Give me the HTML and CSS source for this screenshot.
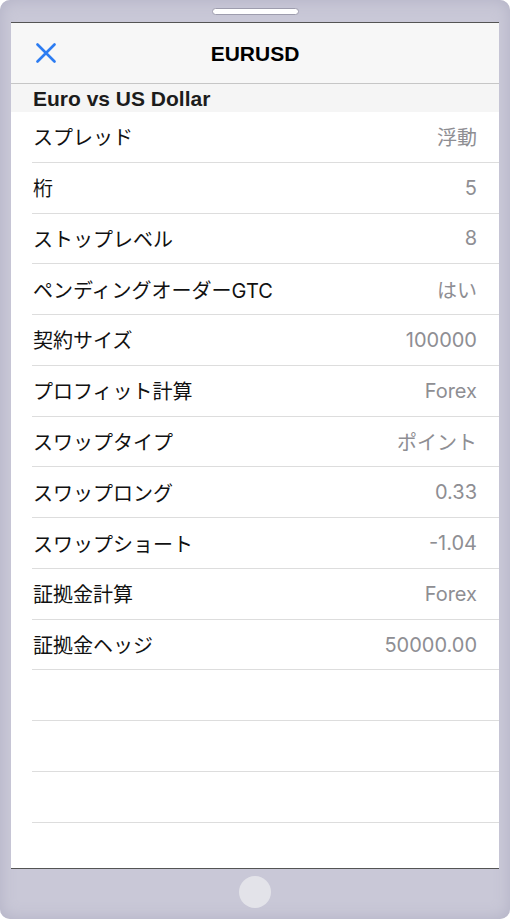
FILE: index.html
```html
<!DOCTYPE html>
<html lang="ja">
<head>
  <meta charset="UTF-8">
  <meta name="viewport" content="width=device-width, initial-scale=1.0">
  <title>EURUSD</title>
  <link rel="stylesheet" href="styles.css">
</head>
<body>
  <div class="phone">
    <div class="top-bezel">
      <div class="speaker"></div>
    </div>
    <div class="screen">
      <div class="nav-bar">
        <button class="close-button" aria-label="閉じる">
          <svg width="20" height="20" viewBox="0 0 20 20">
            <path d="M1.5 1.5 L18.5 18.5 M18.5 1.5 L1.5 18.5" stroke="#2c7cf2" stroke-width="2.6" stroke-linecap="round" fill="none"/>
          </svg>
        </button>
        <div class="nav-title">EURUSD</div>
      </div>
      <div class="section-header">Euro vs US Dollar</div>
      <div class="spec-list">
        <div class="spec-row"><span class="spec-label">スプレッド</span><span class="spec-value">浮動</span></div>
        <div class="spec-row"><span class="spec-label">桁</span><span class="spec-value">5</span></div>
        <div class="spec-row"><span class="spec-label">ストップレベル</span><span class="spec-value">8</span></div>
        <div class="spec-row"><span class="spec-label">ペンディングオーダーGTC</span><span class="spec-value">はい</span></div>
        <div class="spec-row"><span class="spec-label">契約サイズ</span><span class="spec-value">100000</span></div>
        <div class="spec-row"><span class="spec-label">プロフィット計算</span><span class="spec-value">Forex</span></div>
        <div class="spec-row"><span class="spec-label">スワップタイプ</span><span class="spec-value">ポイント</span></div>
        <div class="spec-row"><span class="spec-label">スワップロング</span><span class="spec-value">0.33</span></div>
        <div class="spec-row"><span class="spec-label">スワップショート</span><span class="spec-value">-1.04</span></div>
        <div class="spec-row"><span class="spec-label">証拠金計算</span><span class="spec-value">Forex</span></div>
        <div class="spec-row"><span class="spec-label">証拠金ヘッジ</span><span class="spec-value">50000.00</span></div>
        <div class="spec-row"></div>
        <div class="spec-row"></div>
        <div class="spec-row"></div>
      </div>
    </div>
    <div class="bottom-bezel">
      <div class="home-button"></div>
    </div>
  </div>
</body>
</html>
```

FILE: styles.css
```css
body {
  margin: 0;
  padding: 0;
  background-color: #fff;
  font-family: 'Liberation Sans', 'Noto Sans CJK JP', sans-serif;
}

.phone {
  width: 510px;
  height: 919px;
  display: flex;
  flex-direction: column;
  background-color: #c9c8d7;
  border-radius: 10px;
  box-shadow: inset 0 0 16px #b2b1c5;
  overflow: hidden;
}

.top-bezel {
  height: 22px;
  display: flex;
  justify-content: center;
  padding-top: 8px;
  box-sizing: border-box;
}

.speaker {
  width: 87px;
  height: 7px;
  background: #fff;
  border: 1px solid #9e9dae;
  border-radius: 4px;
  box-sizing: border-box;
}

.screen {
  flex: 1;
  margin: 0 11px;
  background: #fff;
  border-top: 1px solid #545454;
  border-bottom: 1px solid #545454;
  display: flex;
  flex-direction: column;
}

.nav-bar {
  height: 61px;
  display: flex;
  align-items: center;
  justify-content: center;
  position: relative;
  background: #f7f7f7;
  border-bottom: 1px solid #c6c6c6;
  box-sizing: border-box;
}

.close-button {
  position: absolute;
  left: 25px;
  top: 20px;
  width: 20px;
  height: 20px;
  padding: 0;
  border: none;
  background: none;
  display: flex;
}

.nav-title {
  font-size: 21px;
  font-weight: bold;
  color: #000;
  margin-top: 1px;
}

.section-header {
  height: 28px;
  padding-left: 22px;
  background: #f5f5f5;
  font-size: 21px;
  font-weight: bold;
  color: #1c1c1c;
  line-height: 30px;
  box-sizing: border-box;
}

.spec-list {
  display: flex;
  flex-direction: column;
}

.spec-row {
  height: 50.77px;
  margin-left: 21px;
  padding: 0 22px 0 1px;
  display: flex;
  align-items: center;
  justify-content: space-between;
  border-bottom: 1px solid #dddddd;
  box-sizing: border-box;
  font-family: Inter, 'Noto Sans CJK JP', sans-serif;
  font-size: 20px;
}

.spec-label {
  color: #111;
}

.spec-value {
  color: #8e8e93;
}

.bottom-bezel {
  height: 50px;
  display: flex;
  justify-content: center;
  padding-top: 7px;
  box-sizing: border-box;
}

.home-button {
  width: 32px;
  height: 32px;
  border-radius: 50%;
  background: #e3e3e9;
}
```
